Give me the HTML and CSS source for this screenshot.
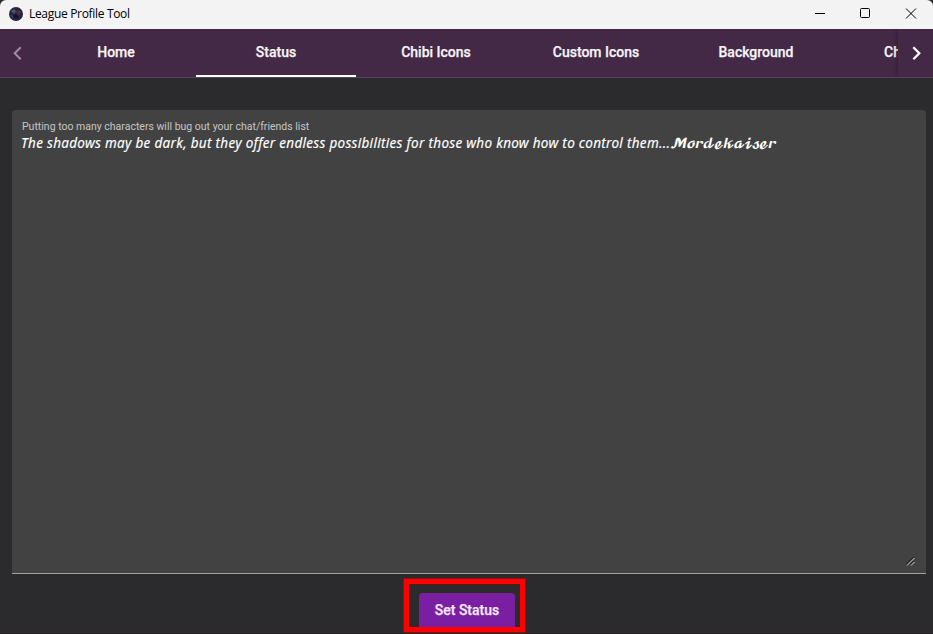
FILE: index.html
```html
<!DOCTYPE html>
<html lang="en">
<head>
<meta charset="utf-8">
<title>League Profile Tool</title>
<link rel="stylesheet" href="styles.css">
</head>
<body>
<div class="window">
  <header class="titlebar">
    <svg class="logo" width="14" height="14" viewBox="0 0 14 14"><circle cx="7" cy="7" r="7" fill="#24253f"/><path d="M2 4l3-2 2 2-2 3z" fill="#4c5578"/><path d="M7 4l4-1 1 3-3 3z" fill="#542d3c"/><path d="M4 8l4-1 2 4-4 1z" fill="#151426"/><path d="M2 8l2 1v2z" fill="#535173"/></svg>
    <span class="title">League Profile Tool</span>
    <svg class="controls" width="113" height="28" viewBox="0 0 113 28" fill="none" stroke="#000"><path d="M5 13.500h10"/><rect x="50.500" y="8.500" width="9" height="9" rx="1"/><path d="M96 8.500l10 10M106 8.500l-10 10"/></svg>
  </header>
  <nav class="tabs">
    <button class="pager"><svg width="36" height="48" fill="none" stroke="#9b8fa0" stroke-width="2"><path d="M20.700 18.200l-6 6 6 6"/></svg></button>
    <div class="viewport">
      <a class="tab">Home</a><a class="tab active">Status</a><a class="tab">Chibi Icons</a><a class="tab">Custom Icons</a><a class="tab">Background</a><a class="tab partial">Ch</a>
    </div>
    <button class="pager next"><svg width="36" height="48" fill="none" stroke="#fff" stroke-width="2.300"><path d="M16.300 18.200l6 6-6 6"/></svg></button>
  </nav>
  <main>
    <section class="field">
      <label>Putting too many characters will bug out your chat/friends list</label>
      <div class="message"><span class="quote">The shadows may be dark, but they offer endless possibilities for those who know how to control them...</span><span class="script">𝓜𝓸𝓻𝓭𝓮𝓴𝓪𝓲𝓼𝓮𝓻</span></div>
      <svg class="grip" width="9" height="9" viewBox="0 0 9 9" stroke-width="1"><path d="M0 7.500L7.500 0M4 7.500L7.500 4" stroke="#171717"/><path d="M1 8.500L8.500 1M5 8.500L8.500 5" stroke="#d0d0d0"/></svg>
    </section>
    <div class="actions"><div class="highlight"><button class="submit">Set Status</button></div></div>
  </main>
</div>
</body>
</html>
```
FILE: styles.css
```css
* { box-sizing: border-box; }
body { margin: 0; background: #2b2b2d; font-family: Roboto, sans-serif; }
button { border: 0; padding: 0; font: inherit; background: none; }
svg { display: block; }
.window { width: 933px; height: 634px; overflow: hidden; display: flex; flex-direction: column; border-bottom: 1px solid #242124; }
.titlebar { height: 29px; flex: none; background: #f3f3f3; display: flex; align-items: center; padding: 0 10px 2px 9px; border-radius: 6px 6px 0 0; }
.title { margin-left: 6px; font: 12px/16px "Open Sans", sans-serif; letter-spacing: -0.32px; color: #000; }
.controls { margin-left: auto; margin-top: 1px; }
.tabs { height: 49px; flex: none; display: flex; background: #432946; border-bottom: 1px solid #59425d; }
.pager { width: 36px; flex: none; }
.next { box-shadow: -2px 0 4px rgba(0,0,0,.2); clip-path: inset(0 0 0 -6px); background: #432946; position: relative; width: 35px; }
.next svg { margin-left: -1px; }
.viewport { flex: 1; display: flex; overflow: hidden; }
.tab { flex: none; width: 160px; height: 48px; text-align: center; line-height: 46px; font-size: 14px; font-weight: 500; -webkit-text-stroke: .25px; color: #f6f3f7; }
.active { border-bottom: 2px solid #fff; }
.partial { text-align: left; padding-left: 48px; }
main { flex: 1; display: flex; flex-direction: column; padding: 32px 7px 0 12px; }
.field { height: 464px; flex: none; position: relative; background: #424242; border-radius: 4px 4px 0 0; border-bottom: 1px solid #a3a3a3; padding: 9px 10px 0; color: #fff; }
.field label { display: block; font-size: 10.500px; line-height: 15px; color: #c6c6c6; white-space: nowrap; }
.message { display: flex; height: 18px; line-height: 18px; white-space: nowrap; margin-left: -1px; }
.quote { width: 649px; font: italic 400 13.500px/18px "Noto Sans", sans-serif; letter-spacing: .3px; -webkit-text-stroke: .15px; }
.script { font: 12.500px/22px "DejaVu Math TeX Gyre", "DejaVu Serif", serif; letter-spacing: -1.480px; }
.grip { position: absolute; right: 11px; bottom: 7px; }
.actions { display: flex; padding: 5px 0 0 392px; }
.highlight { width: 121px; height: 53px; border: 5px solid #f00; outline: 1px solid #8a1114; box-shadow: inset 0 0 0 1px #641316; padding: 9px 5px 0 10px; }
.submit { display: block; width: 96px; height: 34px; border-radius: 4px 4px 0 0; background: #7b1fa2; color: #f4eaf7; font-size: 14px; font-weight: 500; -webkit-text-stroke: .25px; line-height: 35px; }
```
